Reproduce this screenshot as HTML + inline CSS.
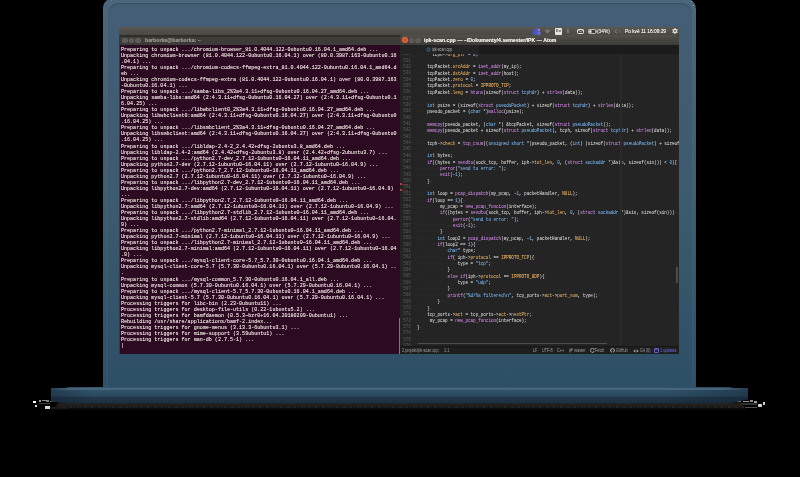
<!DOCTYPE html>
<html><head><meta charset="utf-8"><style>
*{margin:0;padding:0;box-sizing:border-box}
html,body{width:800px;height:477px;background:#000;overflow:hidden}
body{position:relative;font-family:"Liberation Sans",sans-serif}
.a{position:absolute}
#lid{left:103px;top:-1px;width:593px;height:388px;border-radius:8.5px 9.5px 0 0;background:linear-gradient(#4b667a,#405d72 50%,#2f5067)}
#lidin{left:107.5px;top:2.5px;width:584px;height:385px;border-radius:11px 11px 0 0;background:linear-gradient(#445f75,#3c5a70 52%,#2d4f65);box-shadow:0 0 0 0.6px rgba(90,120,140,.35),inset 0 1px 0.8px rgba(40,62,80,.55)}
#base{left:51px;top:387px;width:697px;height:16.5px;background:linear-gradient(#33546a 0,#3a5b72 0.8px,#4a6a82 1.4px,#4a6a82 2.4px,#2e4e64 3.2px,#2b4a60 9.3px,#21374a 9.9px,#1e3140 16.5px)}
#baseR{left:660px;top:387px;width:88px;height:16.5px;background:linear-gradient(90deg,rgba(15,30,45,0),rgba(15,30,45,.4))}
#baseL{left:51px;top:387px;width:40px;height:16.5px;background:linear-gradient(90deg,rgba(15,30,45,.35),rgba(15,30,45,0))}
#shadow{left:51px;top:403.5px;width:697px;height:5.5px;background:linear-gradient(#2b2724,#211f1e 50%,#151515)}
#shL{left:51px;top:403px;width:20px;height:6px;background:linear-gradient(90deg,#000,rgba(0,0,0,0))}
#shR{left:718px;top:403px;width:30px;height:6px;background:linear-gradient(90deg,rgba(0,0,0,0),#000)}
.w{position:absolute;background:#fff}
#screen{left:119px;top:27px;width:559.5px;height:327px;background:#3c3b37;overflow:hidden}
#panel{left:0;top:0;width:560px;height:8px;background:linear-gradient(#5a5750,#4a4843)}
#term{left:0;top:8px;width:281px;height:319px;background:#2c0a22;border-left:1px solid #5a2450}
#ttitle{left:0;top:0;width:281px;height:10px;background:linear-gradient(#2d2c29 0,#2f2e2b 1.4px,#3d3c38 2.2px,#3c3b37)}
#ttext{left:0.6px;top:11.4px;font:12.12px/12.1px "Liberation Mono",monospace;color:#e6dcd8;white-space:pre;transform:scale(0.41665,0.5);transform-origin:0 0;text-shadow:0 0 1px rgba(230,220,216,.75)}
#atom{left:281px;top:8px;width:279px;height:319px;background:#242424;border-radius:2.5px 2.5px 0 0;overflow:hidden}
#atitle{left:0;top:0;width:279px;height:10px;background:linear-gradient(#52504a,#47453f 45%,#3d3c38)}
#tabs{left:0;top:10px;width:279px;height:9px;background:#1b1b1b}
#tab{left:0;top:10px;width:79px;height:9px;background:#232323}
#nums{left:0;top:16px;width:26.2px;text-align:right;font:10.2px/12.68px "Liberation Mono",monospace;color:#5c5c5c;white-space:pre;transform:scale(0.41665,0.5);transform-origin:0 0}
#code{left:16.7px;top:16px;font:11.6px/12.68px "Liberation Mono",monospace;color:#d2d2d2;white-space:pre;transform:scale(0.3664,0.5);transform-origin:0 0;text-shadow:0 0 0.5px rgba(210,210,210,.4)}
#code i{font-style:normal;color:#363636;text-shadow:none}
#code b{font-weight:normal}
.kp{color:#c975e5}.kb{color:#62aaf0}.fn{color:#c975e5}.ty{color:#62aaf0}.co{color:#eeaa48}.nu{color:#62aaf0}.me{color:#e0a048}.s{color:#62aaf0}
#wrapg{left:220.3px;top:18.5px;width:1.8px;height:292.5px;background:#2a2a2a}
#hscroll{left:18px;top:308px;width:189px;height:1.1px;background:#4e4e4e}
#vscroll{left:276.3px;top:232px;width:2.2px;height:16px;background:#4c4c4c}
#status{left:0;top:311px;width:279px;height:8px;background:#1e1e1e;border-top:0.5px solid #181818}
.btn{width:5.4px;height:5.4px;border-radius:50%;top:2.6px;background:radial-gradient(circle,#57554f 0,#5f5d58 40%,#65635e 80%,#5a5853 100%)}
.tt{font:bold 10.4px/20px "Liberation Sans",sans-serif;color:#a19e97;white-space:pre;text-shadow:0 0 0.5px currentColor;transform:scale(0.5);transform-origin:0 0}
.st{font:9.4px/14px "Liberation Sans",sans-serif;color:#a0a0a0;white-space:pre;top:0;transform:scale(0.4,0.5);transform-origin:0 0}
.pi{font:5px/8px "Liberation Sans",sans-serif;color:#e8e6e0;white-space:pre;top:0}
</style></head><body>
<div id="lid" class="a"></div>
<div id="lidin" class="a"></div>
<div class="a" style="left:110.5px;top:-0.5px;width:1.6px;height:1.6px;border-radius:50%;background:#3cb060"></div>
<div class="a" style="left:691px;top:1px;width:1.3px;height:1.3px;border-radius:50%;background:#9cc8d0"></div>
<div class="a" style="left:693px;top:4.8px;width:1.3px;height:1.3px;border-radius:50%;background:#9cc8d0"></div>
<div class="a" style="left:695px;top:6.8px;width:1.2px;height:1.2px;border-radius:50%;background:#1a2a90"></div>
<div class="w" style="left:33px;top:401px;width:3.2px;height:2.2px"></div>
<div class="w" style="left:35px;top:405px;width:2px;height:2px;opacity:.85"></div>
<div class="w" style="left:39px;top:400px;width:2px;height:2.4px;opacity:.6"></div>
<div class="w" style="left:42px;top:400px;width:3.5px;height:1.2px;opacity:.55"></div>
<div class="w" style="left:46px;top:400.2px;width:3px;height:2px;opacity:.5"></div>
<div class="w" style="left:50px;top:400.5px;width:5px;height:1.3px;opacity:.45"></div>
<div class="w" style="left:39px;top:402.8px;width:11px;height:1.4px;opacity:.22"></div>
<div class="w" style="left:45px;top:406.2px;width:5px;height:2.4px;opacity:.85"></div>
<div class="w" style="left:51px;top:407px;width:17px;height:1.6px;opacity:.12"></div>
<div class="w" style="left:737px;top:400.5px;width:4px;height:1.3px;opacity:.55"></div>
<div class="w" style="left:743px;top:400.5px;width:6px;height:1.3px;opacity:.6"></div>
<div class="w" style="left:750px;top:400px;width:3px;height:1.6px;opacity:.55"></div>
<div class="w" style="left:754px;top:400.5px;width:3px;height:2px;opacity:.6"></div>
<div class="w" style="left:740px;top:403.2px;width:17px;height:1.4px;opacity:.2"></div>
<div class="w" style="left:757.5px;top:404px;width:4.5px;height:3px;opacity:.85;border-radius:1px"></div>
<div class="w" style="left:763px;top:402px;width:2px;height:3px;opacity:.8"></div>
<div class="w" style="left:745px;top:407px;width:12px;height:1.4px;opacity:.3"></div>
<svg class="a" style="left:0;top:380px" width="800" height="32" viewBox="0 0 800 32">
<defs>
<linearGradient id="gb" gradientUnits="userSpaceOnUse" x1="0" y1="7" x2="0" y2="23.5">
<stop offset="0" stop-color="#34556b"/><stop offset="0.56" stop-color="#2b4a60"/><stop offset="0.6" stop-color="#21374a"/><stop offset="1" stop-color="#1d2f3d"/>
</linearGradient>
<linearGradient id="gh" gradientUnits="userSpaceOnUse" x1="51" y1="0" x2="748" y2="0">
<stop offset="0" stop-color="#4a6a82" stop-opacity="0"/><stop offset="0.03" stop-color="#4a6a82" stop-opacity="1"/><stop offset="0.96" stop-color="#4a6a82" stop-opacity="1"/><stop offset="1" stop-color="#4a6a82" stop-opacity="0"/>
</linearGradient>
<linearGradient id="gs" gradientUnits="userSpaceOnUse" x1="0" y1="23.5" x2="0" y2="29">
<stop offset="0" stop-color="#282522"/><stop offset="0.5" stop-color="#1d1b1a"/><stop offset="1" stop-color="#111"/>
</linearGradient>
<linearGradient id="gx" gradientUnits="userSpaceOnUse" x1="51" y1="0" x2="748" y2="0">
<stop offset="0" stop-color="#0f1e2d" stop-opacity=".4"/><stop offset="0.06" stop-color="#0f1e2d" stop-opacity="0"/><stop offset="0.88" stop-color="#0f1e2d" stop-opacity="0"/><stop offset="1" stop-color="#0f1e2d" stop-opacity=".4"/>
</linearGradient>
<pattern id="gd" patternUnits="userSpaceOnUse" width="7" height="2"><rect x="0" y="0" width="2" height="2" fill="#888"/><rect x="3.5" y="0" width="1.2" height="2" fill="#555"/></pattern>
<filter id="bl" x="-5%" y="-50%" width="110%" height="200%"><feGaussianBlur stdDeviation="0.9"/></filter>
</defs>
<path d="M58 22.5 L742 22.5 L746 29 L54 29 Z" fill="url(#gs)" filter="url(#bl)"/>
<rect x="60" y="26.6" width="690" height="1.3" fill="url(#gd)" opacity=".15"/>
<path d="M51 8 L67 8 L67 7 L731.5 7 L731.5 8 L748 8 L748 19.5 L728 23.5 L70 23.5 L51 21.5 Z" fill="url(#gb)"/>
<path d="M51 8 L67 8 L67 7 L731.5 7 L731.5 8 L748 8 L748 19.5 L728 23.5 L70 23.5 L51 21.5 Z" fill="url(#gx)"/>
<rect x="51" y="8.1" width="697" height="1.7" fill="url(#gh)"/>
</svg>
<div id="screen" class="a">
  <div id="panel" class="a">
    <svg class="a" style="left:412.5px;top:0.8px" width="9" height="7" viewBox="0 0 9 7"><circle cx="6.8" cy="1.8" r="1.4" fill="#7b83eb"/><path d="M5.3 3.4h3.2v2a1.6 1.6 0 0 1-3.2 0z" fill="#6a70d8"/><circle cx="4" cy="1.6" r="1.5" fill="#5059c9"/><rect x="0.5" y="2.2" width="4.6" height="4.4" rx="0.6" fill="#4b53bc"/><rect x="2.4" y="3.2" width="3.8" height="3.6" rx="1.2" fill="#5059c9"/></svg>
    <svg class="a" style="left:425px;top:1.5px" width="7" height="5" viewBox="0 0 7 5"><path d="M0.5 1.5 Q3.5 -0.5 6.5 1.5 L3.5 4.8 Z" fill="#77756f"/></svg>
    <div class="a" style="left:435.5px;top:1px;width:7.2px;height:6.6px;border-radius:0.8px;background:#e4e2dc"><div class="a" style="left:1.2px;top:0;font:bold 4.4px/6.6px 'Liberation Sans';color:#5a5853;transform:scaleX(0.9);transform-origin:0 0">En</div></div>
    <svg class="a" style="left:447px;top:1.2px" width="4" height="6" viewBox="0 0 4 6"><path d="M0.6 1.7L3 4.1L1.8 5.3V0.7L3 1.9L0.6 4.3" stroke="#85837d" stroke-width="0.7" fill="none"/></svg>
    <svg class="a" style="left:457.5px;top:1.8px" width="7" height="5" viewBox="0 0 7 5"><rect x="0.5" y="0.5" width="6" height="4" rx="0.8" fill="#45433e" stroke="#ebe9e4" stroke-width="1"/><path d="M1 1.2L3.5 2.6L6 1.2" stroke="#ebe9e4" stroke-width="0.7" fill="none"/></svg>
    <svg class="a" style="left:468.5px;top:1.8px" width="9" height="5" viewBox="0 0 9 5"><rect x="0.5" y="0.5" width="7.2" height="4" rx="0.7" fill="#3f3d39" stroke="#d6d3cc" stroke-width="0.8"/><rect x="1.2" y="1.2" width="2.3" height="2.6" fill="#ebe9e4"/><rect x="7.9" y="1.6" width="0.9" height="1.8" fill="#d6d3cc"/></svg>
    <div class="a pi" style="left:477.5px;top:-0.2px;color:#dedbd4;font-size:9.6px;line-height:16px;transform:scale(0.5);transform-origin:0 0;text-shadow:0 0 0.5px currentColor">(34%)</div>
    <svg class="a" style="left:494.5px;top:1.5px" width="8" height="5" viewBox="0 0 8 5"><path d="M3.2 0.6L0.7 2.5L3.2 4.4" stroke="#8f8d87" stroke-width="0.8" fill="none"/><path d="M6.6 1.2L5 2.5L6.6 3.8" stroke="#77756f" stroke-width="0.7" fill="none"/></svg>
    <div class="a pi" style="left:506px;top:-0.1px;font-size:9.6px;line-height:16px;transform:scale(0.5);transform-origin:0 0;text-shadow:0 0 0.5px currentColor">Po kvě 11 16:09:29</div>
    <svg class="a" style="left:552.5px;top:1px" width="6" height="6" viewBox="-3 -3 6 6"><g fill="#ebe9e4"><circle r="2.1"/><rect x="-0.6" y="-2.9" width="1.2" height="5.8"/><rect x="-0.6" y="-2.9" width="1.2" height="5.8" transform="rotate(60)"/><rect x="-0.6" y="-2.9" width="1.2" height="5.8" transform="rotate(120)"/></g><circle r="0.9" fill="#4e4c47"/></svg>
  </div>
  <div id="term" class="a">
    <div id="ttitle" class="a">
      <div class="a btn" style="left:2.4px;top:2.9px"></div>
      <div class="a btn" style="left:8.6px;top:2.9px"></div>
      <div class="a btn" style="left:15.4px;top:2.9px"></div>
      <div class="a tt" style="left:24.5px;top:0.3px;color:#8f8c85">barborka@barborka: ~</div>
    </div>
    <div id="ttext" class="a">Preparing to unpack .../chromium-browser_81.0.4044.122-0ubuntu0.16.04.1_amd64.deb ...
Unpacking chromium-browser (81.0.4044.122-0ubuntu0.16.04.1) over (80.0.3987.163-0ubuntu0.16
.04.1) ...
Preparing to unpack .../chromium-codecs-ffmpeg-extra_81.0.4044.122-0ubuntu0.16.04.1_amd64.d
eb ...
Unpacking chromium-codecs-ffmpeg-extra (81.0.4044.122-0ubuntu0.16.04.1) over (80.0.3987.163
-0ubuntu0.16.04.1) ...
Preparing to unpack .../samba-libs_2%3a4.3.11+dfsg-0ubuntu0.16.04.27_amd64.deb ...
Unpacking samba-libs:amd64 (2:4.3.11+dfsg-0ubuntu0.16.04.27) over (2:4.3.11+dfsg-0ubuntu0.1
6.04.25) ...
Preparing to unpack .../libwbclient0_2%3a4.3.11+dfsg-0ubuntu0.16.04.27_amd64.deb ...
Unpacking libwbclient0:amd64 (2:4.3.11+dfsg-0ubuntu0.16.04.27) over (2:4.3.11+dfsg-0ubuntu0
.16.04.25) ...
Preparing to unpack .../libsmbclient_2%3a4.3.11+dfsg-0ubuntu0.16.04.27_amd64.deb ...
Unpacking libsmbclient:amd64 (2:4.3.11+dfsg-0ubuntu0.16.04.27) over (2:4.3.11+dfsg-0ubuntu0
.16.04.25) ...
Preparing to unpack .../libldap-2.4-2_2.4.42+dfsg-2ubuntu3.8_amd64.deb ...
Unpacking libldap-2.4-2:amd64 (2.4.42+dfsg-2ubuntu3.8) over (2.4.42+dfsg-2ubuntu3.7) ...
Preparing to unpack .../python2.7-dev_2.7.12-1ubuntu0~16.04.11_amd64.deb ...
Unpacking python2.7-dev (2.7.12-1ubuntu0~16.04.11) over (2.7.12-1ubuntu0~16.04.9) ...
Preparing to unpack .../python2.7_2.7.12-1ubuntu0~16.04.11_amd64.deb ...
Unpacking python2.7 (2.7.12-1ubuntu0~16.04.11) over (2.7.12-1ubuntu0~16.04.9) ...
Preparing to unpack .../libpython2.7-dev_2.7.12-1ubuntu0~16.04.11_amd64.deb ...
Unpacking libpython2.7-dev:amd64 (2.7.12-1ubuntu0~16.04.11) over (2.7.12-1ubuntu0~16.04.9)
...
Preparing to unpack .../libpython2.7_2.7.12-1ubuntu0~16.04.11_amd64.deb ...
Unpacking libpython2.7:amd64 (2.7.12-1ubuntu0~16.04.11) over (2.7.12-1ubuntu0~16.04.9) ...
Preparing to unpack .../libpython2.7-stdlib_2.7.12-1ubuntu0~16.04.11_amd64.deb ...
Unpacking libpython2.7-stdlib:amd64 (2.7.12-1ubuntu0~16.04.11) over (2.7.12-1ubuntu0~16.04.
9) ...
Preparing to unpack .../python2.7-minimal_2.7.12-1ubuntu0~16.04.11_amd64.deb ...
Unpacking python2.7-minimal (2.7.12-1ubuntu0~16.04.11) over (2.7.12-1ubuntu0~16.04.9) ...
Preparing to unpack .../libpython2.7-minimal_2.7.12-1ubuntu0~16.04.11_amd64.deb ...
Unpacking libpython2.7-minimal:amd64 (2.7.12-1ubuntu0~16.04.11) over (2.7.12-1ubuntu0~16.04
.9) ...
Preparing to unpack .../mysql-client-core-5.7_5.7.30-0ubuntu0.16.04.1_amd64.deb ...
Unpacking mysql-client-core-5.7 (5.7.30-0ubuntu0.16.04.1) over (5.7.29-0ubuntu0.16.04.1) ..
.
Preparing to unpack .../mysql-common_5.7.30-0ubuntu0.16.04.1_all.deb ...
Unpacking mysql-common (5.7.30-0ubuntu0.16.04.1) over (5.7.29-0ubuntu0.16.04.1) ...
Preparing to unpack .../mysql-client-5.7_5.7.30-0ubuntu0.16.04.1_amd64.deb ...
Unpacking mysql-client-5.7 (5.7.30-0ubuntu0.16.04.1) over (5.7.29-0ubuntu0.16.04.1) ...
Processing triggers for libc-bin (2.23-0ubuntu11) ...
Processing triggers for desktop-file-utils (0.22-1ubuntu5.2) ...
Processing triggers for bamfdaemon (0.5.3~bzr0+16.04.20180209-0ubuntu1) ...
Rebuilding /usr/share/applications/bamf-2.index...
Processing triggers for gnome-menus (3.13.3-6ubuntu3.1) ...
Processing triggers for mime-support (3.59ubuntu1) ...
Processing triggers for man-db (2.7.5-1) ...
<span style="color:#ddd">|</span></div>
  </div>
  <div class="a" style="left:280.2px;top:291px;width:0.9px;height:36px;background:#7a7a7a"></div>
  <div id="atom" class="a">
    <div id="nums" class="a">530
531
532
533
534
535
536
537
538
539
540
541
542
543
544
545
546
547
548
549
550
551
552
553
554
555
556
557
558
559
560
561
562
563
564
565
566
567
568
569
570
571
572
573
574
575
576</div>
    <div id="code" class="a"><i>······</i>tcph-&gt;<b class=me>urg_ptr</b> = <b class=nu>0</b>;<i>¬</i>

<i>····</i>tcpPacket.<b class=me>srcAddr</b> = <b class=fn>inet_addr</b>(my_ip);<i>¬</i>
<i>····</i>tcpPacket.<b class=me>dstAddr</b> = <b class=fn>inet_addr</b>(host);<i>¬</i>
<i>····</i>tcpPacket.<b class=me>zero</b> = <b class=nu>0</b>;<i>¬</i>
<i>····</i>tcpPacket.<b class=me>protocol</b> = <b class=co>IPPROTO_TCP</b>;<i>¬</i>
<i>····</i>tcpPacket.<b class=me>leng</b> = <b class=fn>htons</b>(sizeof(<b class=kp>struct</b> <b class=ty>tcphdr</b>) + <b class=fn>strlen</b>(data));<i>¬</i>

<i>····</i><b class=kb>int</b> psize = (sizeof(<b class=kp>struct</b> <b class=ty>pseudoPacket</b>) + sizeof(<b class=kp>struct</b> <b class=ty>tcphdr</b>) + <b class=fn>strlen</b>(data));<i>¬</i>
<i>····</i>pseudo_packet = (<b class=kb>char</b> *)<b class=fn>malloc</b>(psize);<i>¬</i>

<i>····</i><b class=fn>memcpy</b>(pseudo_packet, (<b class=kb>char</b> *) &amp;tcpPacket, sizeof(<b class=kp>struct</b> <b class=ty>pseudoPacket</b>));<i>¬</i>
<i>····</i><b class=fn>memcpy</b>(pseudo_packet + sizeof(<b class=kp>struct</b> <b class=ty>pseudoPacket</b>), tcph, sizeof(<b class=kp>struct</b> <b class=ty>tcphdr</b>) + <b class=fn>strlen</b>(data));<i>¬</i>

<i>····</i>tcph-&gt;<b class=me>check</b> = <b class=fn>tcp_csum</b>((<b class=kb>unsigned</b> <b class=kb>short</b> *)pseudo_packet, (<b class=kb>int</b>) (sizeof(<b class=kp>struct</b> <b class=ty>pseudoPacket</b>) + sizeof(<b class=kp>struct</b> <b class=ty>tcphdr</b>)));<i>¬</i>

<i>····</i><b class=kb>int</b> bytes;<i>¬</i>
<i>····</i><b class=kp>if</b>((bytes = <b class=fn>sendto</b>(sock_tcp, buffer, iph-&gt;<b class=me>tot_len</b>, <b class=nu>0</b>, (<b class=kp>struct</b> <b class=ty>sockaddr</b> *)&amp;sin, sizeof(sin))) &lt; <b class=nu>0</b>){<i>¬</i>
<i>·········</i><b class=fn>perror</b>(<b class=s>&quot;send to error: &quot;</b>);<i>¬</i>
<i>·········</i><b class=fn>exit</b>(-<b class=nu>1</b>);<i>¬</i>
<i>····</i>}<i>¬</i>

<i>····</i><b class=kb>int</b> loop = <b class=fn>pcap_dispatch</b>(my_pcap, -<b class=nu>1</b>, packetHandler, <b class=co>NULL</b>);<i>¬</i>
<i>····</i><b class=kp>if</b>(loop == <b class=nu>1</b>){<i>¬</i>
<i>·········</i>my_pcap = <b class=fn>new_pcap_funcion</b>(interface);<i>¬</i>
<i>·········</i><b class=kp>if</b>((bytes = <b class=fn>sendto</b>(sock_tcp, buffer, iph-&gt;<b class=me>tot_len</b>, <b class=nu>0</b>, (<b class=kp>struct</b> <b class=ty>sockaddr</b> *)&amp;sin, sizeof(sin)))<i>¬</i>
<i>··············</i><b class=fn>perror</b>(<b class=s>&quot;send to error: &quot;</b>);<i>¬</i>
<i>··············</i><b class=fn>exit</b>(-<b class=nu>1</b>);<i>¬</i>
<i>·········</i>}<i>¬</i>
<i>········</i><b class=kb>int</b> loop2 = <b class=fn>pcap_dispatch</b>(my_pcap, -<b class=nu>1</b>, packetHandler, <b class=co>NULL</b>);<i>¬</i>
<i>········</i><b class=kp>if</b>(loop2 == <b class=nu>1</b>){<i>¬</i>
<i>············</i><b class=kb>char</b>* type;<i>¬</i>
<i>············</i><b class=kp>if</b>( iph-&gt;<b class=me>protocol</b> == <b class=co>IPPROTO_TCP</b>){<i>¬</i>
<i>················</i>type = <b class=s>&quot;tcp&quot;</b>;<i>¬</i>
<i>············</i>}<i>¬</i>
<i>············</i><b class=kp>else</b> <b class=kp>if</b>(iph-&gt;<b class=me>protocol</b> == <b class=co>IPPROTO_UDP</b>){<i>¬</i>
<i>················</i>type = <b class=s>&quot;udp&quot;</b>;<i>¬</i>
<i>············</i>}<i>¬</i>
<i>············</i><b class=fn>printf</b>(<b class=s>&quot;%d/%s filtered\n&quot;</b>, tcp_ports-&gt;<b class=me>act</b>-&gt;<b class=me>port_num</b>, type);<i>¬</i>
<i>········</i>}<i>¬</i>
<i>····</i>}<i>¬</i>
<i>····</i>tcp_ports-&gt;<b class=me>act</b> = tcp_ports-&gt;<b class=me>act</b>-&gt;<b class=me>nextPtr</b>;<i>¬</i>
<i>·····</i>my_pcap = <b class=fn>new_pcap_funcion</b>(interface);<i>¬</i>
}<i>¬</i>


</div>
    <div id="wrapg" class="a"></div>
    <div class="a" style="left:0;top:147.8px;width:2px;height:2px;border-radius:0 1px 1px 0;background:#c83c3c"></div>
    <div class="a" style="left:2px;top:148.5px;width:6px;height:0.6px;background:rgba(200,60,60,.3)"></div>
    <div class="a" style="left:0;top:154.1px;width:2px;height:2px;border-radius:0 1px 1px 0;background:#c83c3c"></div>
    <div class="a" style="left:2px;top:154.8px;width:6px;height:0.6px;background:rgba(200,60,60,.3)"></div>
    <div id="hscroll" class="a"></div>
    <div id="vscroll" class="a"></div>
    <div id="tabs" class="a"></div>
    <div id="tab" class="a">
      <svg class="a" style="left:26px;top:2px" width="5" height="5" viewBox="0 0 5 5"><circle cx="2.5" cy="2.5" r="1.6" fill="none" stroke="#35607e" stroke-width="1.1"/></svg>
      <div class="a st" style="left:31.5px;top:0.8px;color:#b8b8b8;transform:scale(0.385,0.5)">ipk-scan.cpp</div>
    </div>
    <div id="atitle" class="a">
      <div class="a btn" style="left:2.3px;width:5.6px;height:5.6px;top:2.4px;background:radial-gradient(circle,#b8482a 0,#e05a30 40%,#ec6a3e 80%,#d85a30 100%)"></div>
      <div class="a btn" style="left:8.8px"></div>
      <div class="a btn" style="left:15.3px"></div>
      <div class="a tt" style="left:24px;top:0;color:#e6e3dc">ipk-scan.cpp — ~/Dokumenty/4.semester/IPK — Atom</div>
    </div>
    <div id="status" class="a">
      <div class="a st" style="left:2px">2.projekt/ipk-scan.cpp</div>
      <div class="a st" style="left:44px">1:1</div>
      <div class="a st" style="left:133px">LF</div>
      <div class="a st" style="left:142px">UTF-8</div>
      <div class="a st" style="left:157px">C++</div>
      <svg class="a" style="left:169px;top:1.2px" width="4" height="5" viewBox="0 0 4 5"><path d="M1 0.5V4.5M1 3.2Q3 3 3 1" stroke="#9a9a9a" stroke-width="0.8" fill="none"/><circle cx="3" cy="1" r="0.7" fill="#9a9a9a"/></svg>
      <div class="a st" style="left:173.5px">master</div>
      <svg class="a" style="left:190px;top:1px" width="5" height="5" viewBox="0 0 5 5"><path d="M4 1.2A2 2 0 1 0 4.3 3" stroke="#b0b0b0" stroke-width="0.9" fill="none"/><path d="M3 0.3L4.6 0.6L4.2 2.2Z" fill="#b0b0b0"/></svg>
      <div class="a st" style="left:195px">Fetch</div>
      <svg class="a" style="left:209.8px;top:0.9px" width="5" height="5" viewBox="0 0 5 5"><circle cx="2.5" cy="2.5" r="2.3" fill="#b5b5b5"/><circle cx="2.5" cy="2.3" r="1.2" fill="#1e1e1e"/><rect x="1.8" y="3" width="1.4" height="2" fill="#1e1e1e"/></svg>
      <div class="a st" style="left:216px">GitHub</div>
      <svg class="a" style="left:233px;top:1.5px" width="6" height="4" viewBox="0 0 6 4"><path d="M0.3 2Q3 -0.6 5.7 2Q3 4.6 0.3 2Z" fill="#b0b0b0"/><circle cx="3" cy="2" r="0.9" fill="#1e1e1e"/></svg>
      <div class="a st" style="left:239.5px">Git (0)</div>
      <svg class="a" style="left:253.5px;top:1px" width="5" height="5" viewBox="0 0 5 5"><rect x="0.5" y="0.5" width="4" height="4" rx="0.6" fill="none" stroke="#6e6ee6" stroke-width="0.9"/><path d="M0.5 1.8H4.5" stroke="#6e6ee6" stroke-width="0.7"/></svg>
      <div class="a st" style="left:260px;color:#7272f0">1 updates</div>
    </div>
  </div>
</div>
</body></html>
